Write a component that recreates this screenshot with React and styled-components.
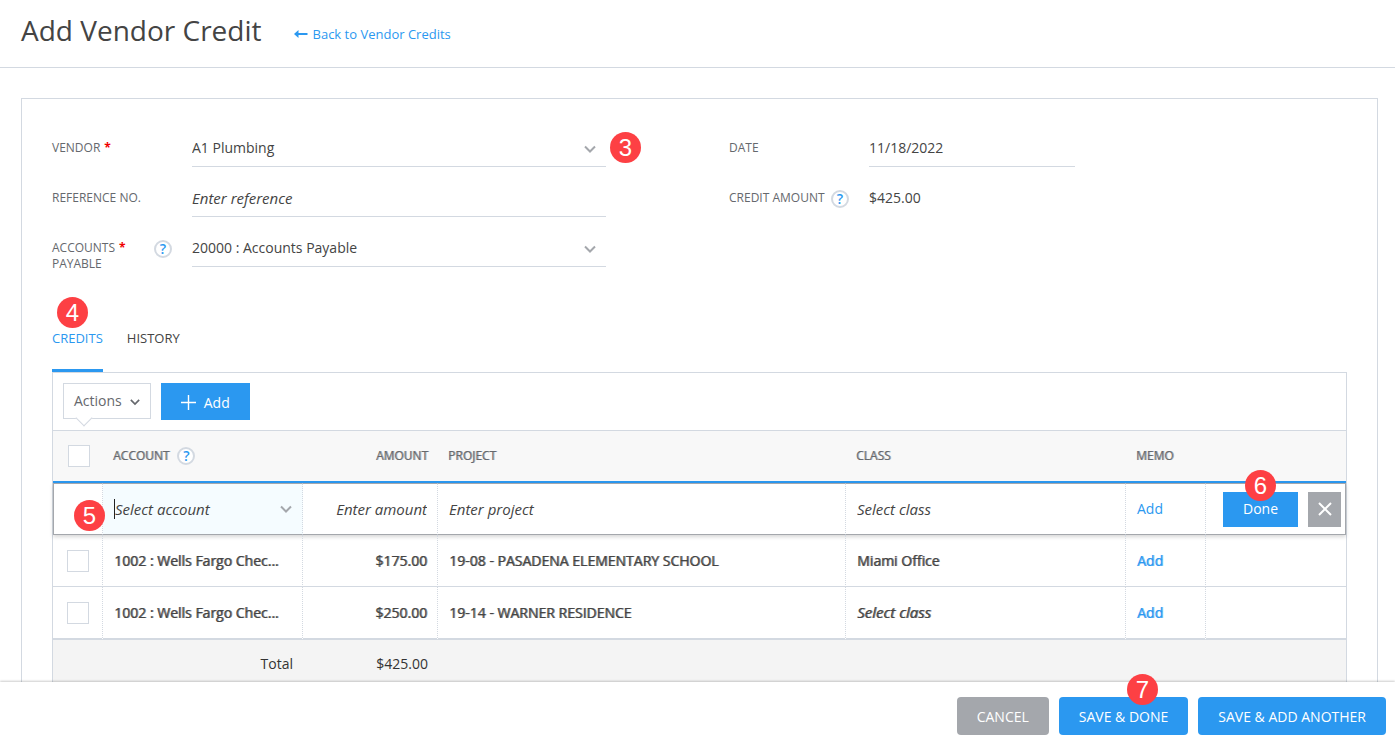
import React, { useState } from 'react';
import styled, { createGlobalStyle, css } from 'styled-components';

const colors = {
  blue: '#2b98f0',
  gray: '#a4a7ac',
  line: '#d3d9e1',
  text: '#444444',
  label: '#65686d',
  badge: '#fd4044',
};

const GlobalStyle = createGlobalStyle`
  * {
    box-sizing: border-box;
  }

  body {
    margin: 0;

    color: ${colors.text};
    background: white;

    font-family: 'Open Sans', 'Noto Sans', sans-serif;
    font-size: 14px;
    line-height: 20px;
  }

  button,
  input,
  select {
    margin: 0;
    padding: 0;

    border: none;
    border-radius: 0;
    outline: none;

    color: inherit;
    background: transparent;

    font: inherit;
  }

  button {
    cursor: pointer;
  }
`;

const Page = styled.div`
  display: flex;
  flex-direction: column;

  height: 100vh;
`;

const PageHeader = styled.header`
  display: flex;
  flex: none;
  align-items: flex-start;
  gap: 32px;

  padding: 10px 21px 17px;

  border-bottom: 1px solid ${colors.line};
`;

const PageTitle = styled.h1`
  margin: 0;

  font-size: 28px;
  font-weight: 400;
  line-height: 40px;
`;

const BackLink = styled.a`
  display: inline-flex;
  align-items: center;
  gap: 5px;

  padding-top: 14px;

  color: ${colors.blue};

  font-size: 13px;
  text-decoration: none;
`;

const Content = styled.main`
  flex: 1;

  min-height: 0;
  padding: 30px 17px 0 21px;

  overflow: hidden;
`;

const Panel = styled.section`
  padding: 24px 30px 60px;

  border: 1px solid ${colors.line};
`;

const FieldGrid = styled.div`
  display: grid;
  grid-template-columns: 554fr 618fr;
  column-gap: 123px;
`;

const FieldColumn = styled.div`
  display: flex;
  flex-direction: column;
`;

const Field = styled.div`
  display: flex;
  align-items: flex-start;

  height: 50px;
`;

const FieldLabel = styled.div`
  display: flex;
  flex: none;
  justify-content: space-between;

  width: 140px;
  padding: 17px 20px 0 0;

  color: ${colors.label};

  font-size: 12px;
  line-height: 16px;
`;

const Required = styled.span`
  padding-left: 4px;

  color: #f00000;

  font-weight: 700;
`;

const FieldControl = styled.div`
  display: flex;
  flex: 1;
  align-items: center;
  position: relative;

  max-width: ${(props) => (props.$narrow ? '206px' : 'none')};
  height: 44px;
  padding-top: 6px;

  border-bottom: 1px solid ${(props) => (props.$plain ? 'transparent' : colors.line)};
`;

const emptyText = css`
  font-size: 15px;
  font-style: italic;
`;

const TextInput = styled.input`
  width: 100%;
  height: 20px;

  text-align: ${(props) => props.$align || 'left'};

  &:placeholder-shown {
    ${emptyText}
  }

  &::placeholder {
    color: ${colors.text};
    opacity: 1;
  }
`;

const Select = styled.select`
  flex: 1;

  width: 100%;
  height: 20px;

  appearance: none;

  ${(props) => props.$empty && emptyText}
`;

const ChevronIcon = styled.svg`
  flex: none;

  width: 12px;
  height: 8px;

  fill: none;
  stroke: ${colors.gray};
  stroke-width: 2;

  pointer-events: none;
`;

const FieldChevron = styled(ChevronIcon)`
  margin: 3px 10px 0 0;
`;

const ActionsChevron = styled(ChevronIcon)`
  width: 10px;
  margin-top: 2px;

  stroke: ${colors.label};
`;

const HelpButton = styled.button`
  flex: none;

  width: 18px;
  height: 18px;

  border: 2px solid ${colors.line};
  border-radius: 50%;

  color: ${colors.blue};
  background: white;

  font-size: 14px;
  font-weight: 600;
  line-height: 14px;
  text-align: center;
`;

const Badge = styled.span`
  position: absolute;
  top: ${(props) => props.$top};
  left: ${(props) => props.$left};
  z-index: 2;

  width: 31px;
  height: 31px;

  border-radius: 50%;

  color: white;
  background: ${colors.badge};

  font-family: 'Liberation Sans', sans-serif;
  font-size: 24px;
  font-style: normal;
  font-weight: 400;
  line-height: 31px;
  text-align: center;

  pointer-events: none;
`;

const Tabs = styled.div`
  display: flex;
  gap: 24px;

  margin-top: 55px;
`;

const Tab = styled.button`
  position: relative;

  height: 44px;
  padding-bottom: 21px;

  border-bottom: 3px solid ${(props) => (props.$active ? colors.blue : 'transparent')};

  color: ${(props) => (props.$active ? colors.blue : colors.text)};

  font-size: 13px;
`;

const TableBox = styled.div`
  border: 1px solid ${colors.line};
`;

const Toolbar = styled.div`
  display: flex;
  align-items: flex-start;
  gap: 10px;

  padding: 10px;

  border-bottom: 1px solid ${colors.line};
`;

const ActionsButton = styled.button`
  display: flex;
  align-items: center;
  gap: 8px;
  position: relative;

  height: 36px;
  padding: 0 10px;

  border: 1px solid ${colors.line};

  color: ${colors.label};

  &::after {
    position: absolute;
    bottom: -6px;
    left: 14px;

    width: 11px;
    height: 11px;

    border: solid ${colors.line};
    border-width: 0 1px 1px 0;

    background: white;

    content: '';
    transform: rotate(45deg);
  }
`;

const AddButton = styled.button`
  display: flex;
  align-items: center;
  gap: 8px;

  height: 37px;
  padding: 2px 20px 0;

  color: white;
  background: ${colors.blue};
`;

const Table = styled.table`
  width: 100%;

  border-spacing: 0;
  table-layout: fixed;
`;

const HeadCell = styled.th`
  height: 52px;
  padding: 0 10px;

  border-bottom: 2px solid ${colors.blue};

  color: ${colors.label};
  background: #f8f8f8;

  font-size: 12px;
  font-weight: 500;
  text-align: ${(props) => props.$align || 'left'};
  text-shadow: 1px 0 rgba(101, 104, 109, 0.6);
`;

const HeadContent = styled.div`
  display: flex;
  align-items: center;
  gap: 8px;

  ${HelpButton} {
    text-shadow: none;
  }
`;

const Cell = styled.td`
  position: relative;

  height: 52px;
  padding: 0 10px 0 11px;

  border-right: 1px dotted ${colors.line};
  border-bottom: 1px solid ${colors.line};

  text-align: ${(props) => props.$align || 'left'};
  white-space: nowrap;

  &:last-child {
    border-right: none;
  }
`;

const LinkButton = styled.button`
  color: ${colors.blue};

  font-weight: inherit;
`;

const Row = styled.tr`
  font-weight: 500;
  text-shadow: 1px 0 rgba(68, 68, 68, 0.7);

  ${LinkButton} {
    text-shadow: 1px 0 rgba(43, 152, 240, 0.7);
  }

  &:last-child ${Cell} {
    height: 53px;

    border-bottom-width: 2px;
  }
`;

const EditRow = styled.tr`
  box-shadow: 0 2px 4px rgba(0, 0, 0, 0.16);

  ${Cell} {
    border-top: 1px solid ${colors.gray};
    border-bottom-color: ${colors.gray};
  }

  ${Cell}:first-child {
    border-left: 1px solid ${colors.gray};
  }

  ${Cell}:last-child {
    padding: 0 4px 0 17px;

    border-right: 1px solid ${colors.gray};
  }
`;

const ActiveCell = styled(Cell)`
  background: #f5fcff;
`;

const SelectBox = styled.div`
  display: flex;
  align-items: center;
`;

const CaretSelect = styled(Select)`
  border-left: 1px solid #222222;
`;

const EmptyValue = styled.em`
  ${emptyText}
`;

const CheckBox = styled.input`
  display: block;

  width: 22px;
  height: 22px;
  margin-left: ${(props) => (props.$head ? '5px' : '3px')};

  border: 1px solid ${colors.line};

  background: white;

  appearance: none;

  &:checked {
    background: ${colors.blue};
  }
`;

const RowButtons = styled.div`
  display: flex;
  justify-content: space-between;
`;

const DoneButton = styled.button`
  width: 75px;
  height: 35px;

  color: white;
  background: ${colors.blue};
`;

const CloseButton = styled.button`
  display: flex;
  align-items: center;
  justify-content: center;

  width: 33px;
  height: 35px;

  background: ${colors.gray};
`;

const TotalCell = styled.td`
  height: 48px;
  padding: 0 10px;

  color: #333333;
  background: #f4f4f4;

  font-weight: 500;
  text-align: right;
`;

const FormFooter = styled.footer`
  display: flex;
  flex: none;
  justify-content: flex-end;
  gap: 10px;
  position: relative;

  padding: 15px 9px 11px;

  background: white;
  box-shadow: 0 -1px 2px rgba(0, 0, 0, 0.2);
`;

const FooterButton = styled.button`
  position: relative;

  height: 38px;
  padding: 1px 20px 0;

  border-radius: 4px;

  color: white;
  background: ${(props) => (props.$secondary ? colors.gray : colors.blue)};
`;

const credits = [
  {
    id: 1,
    account: '1002 : Wells Fargo Chec...',
    amount: '$175.00',
    project: '19-08 - PASADENA ELEMENTARY SCHOOL',
    className: 'Miami Office',
  },
  {
    id: 2,
    account: '1002 : Wells Fargo Chec...',
    amount: '$250.00',
    project: '19-14 - WARNER RESIDENCE',
    className: null,
  },
];

function Chevron({ icon: Icon = ChevronIcon }) {
  return (
    <Icon viewBox="0 0 12 8" aria-hidden="true">
      <path d="M1 1.5 6 6.5 11 1.5" />
    </Icon>
  );
}

function Help({ topic }) {
  return (
    <HelpButton type="button" aria-label={`Help: ${topic}`}>
      ?
    </HelpButton>
  );
}

function VendorFields() {
  return (
    <FieldGrid>
      <FieldColumn>
        <Field>
          <FieldLabel>
            <label htmlFor="vendor">
              VENDOR<Required>*</Required>
            </label>
          </FieldLabel>
          <FieldControl>
            <Select id="vendor">
              <option>A1 Plumbing</option>
            </Select>
            <Chevron icon={FieldChevron} />
            <Badge $top="9px" $left="calc(100% + 4px)">
              3
            </Badge>
          </FieldControl>
        </Field>

        <Field>
          <FieldLabel>
            <label htmlFor="reference">REFERENCE NO.</label>
          </FieldLabel>
          <FieldControl>
            <TextInput id="reference" placeholder="Enter reference" />
          </FieldControl>
        </Field>

        <Field>
          <FieldLabel>
            <label htmlFor="payable">
              ACCOUNTS<Required>*</Required>
              <br />
              PAYABLE
            </label>
            <Help topic="accounts payable" />
          </FieldLabel>
          <FieldControl>
            <Select id="payable">
              <option>20000 : Accounts Payable</option>
            </Select>
            <Chevron icon={FieldChevron} />
          </FieldControl>
        </Field>
      </FieldColumn>

      <FieldColumn>
        <Field>
          <FieldLabel>
            <label htmlFor="date">DATE</label>
          </FieldLabel>
          <FieldControl $narrow>
            <TextInput id="date" defaultValue="11/18/2022" />
          </FieldControl>
        </Field>

        <Field>
          <FieldLabel>
            <span>CREDIT AMOUNT</span>
            <Help topic="credit amount" />
          </FieldLabel>
          <FieldControl $narrow $plain>
            $425.00
          </FieldControl>
        </Field>
      </FieldColumn>
    </FieldGrid>
  );
}

function CreditsTable() {
  return (
    <Table>
      <colgroup>
        <col style={{ width: 50 }} />
        <col style={{ width: 200 }} />
        <col style={{ width: 135 }} />
        <col />
        <col style={{ width: 280 }} />
        <col style={{ width: 80 }} />
        <col style={{ width: 140 }} />
      </colgroup>
      <thead>
        <tr>
          <HeadCell>
            <CheckBox $head type="checkbox" aria-label="Select all" />
          </HeadCell>
          <HeadCell>
            <HeadContent>
              ACCOUNT
              <Help topic="account" />
            </HeadContent>
          </HeadCell>
          <HeadCell $align="right">AMOUNT</HeadCell>
          <HeadCell>PROJECT</HeadCell>
          <HeadCell>CLASS</HeadCell>
          <HeadCell>MEMO</HeadCell>
          <HeadCell />
        </tr>
      </thead>
      <tbody>
        <EditRow>
          <Cell>
            <Badge $top="16px" $left="20px">
              5
            </Badge>
          </Cell>
          <ActiveCell>
            <SelectBox>
              <CaretSelect $empty aria-label="Account">
                <option>Select account</option>
              </CaretSelect>
              <Chevron />
            </SelectBox>
          </ActiveCell>
          <Cell>
            <TextInput
              $align="right"
              aria-label="Amount"
              placeholder="Enter amount"
            />
          </Cell>
          <Cell>
            <TextInput aria-label="Project" placeholder="Enter project" />
          </Cell>
          <Cell>
            <Select $empty aria-label="Class">
              <option>Select class</option>
            </Select>
          </Cell>
          <Cell>
            <LinkButton type="button">Add</LinkButton>
          </Cell>
          <Cell>
            <RowButtons>
              <DoneButton type="button">Done</DoneButton>
              <CloseButton type="button" aria-label="Close">
                <svg width="14" height="14" viewBox="0 0 14 14">
                  <path
                    d="M1 1 13 13M13 1 1 13"
                    stroke="white"
                    strokeWidth="2"
                  />
                </svg>
              </CloseButton>
            </RowButtons>
            <Badge $top="-14px" $left="39px">
              6
            </Badge>
          </Cell>
        </EditRow>
        {credits.map((credit) => (
          <Row key={credit.id}>
            <Cell>
              <CheckBox type="checkbox" aria-label={`Select ${credit.project}`} />
            </Cell>
            <Cell>{credit.account}</Cell>
            <Cell $align="right">{credit.amount}</Cell>
            <Cell>{credit.project}</Cell>
            <Cell>
              {credit.className || <EmptyValue>Select class</EmptyValue>}
            </Cell>
            <Cell>
              <LinkButton type="button">Add</LinkButton>
            </Cell>
            <Cell />
          </Row>
        ))}
      </tbody>
      <tfoot>
        <tr>
          <TotalCell colSpan={2}>Total</TotalCell>
          <TotalCell>$425.00</TotalCell>
          <TotalCell colSpan={4} />
        </tr>
      </tfoot>
    </Table>
  );
}

export default function App() {
  const [tab, setTab] = useState('credits');

  return (
    <Page>
      <GlobalStyle />

      <PageHeader>
        <PageTitle>Add Vendor Credit</PageTitle>
        <BackLink href="#credits">
          <svg width="14" height="8" viewBox="0 0 14 8" aria-hidden="true">
            <path d="M0 4 4.5 0V3H13.5V5H4.5V8Z" fill={colors.blue} />
          </svg>
          Back to Vendor Credits
        </BackLink>
      </PageHeader>

      <Content>
        <Panel>
          <VendorFields />

          <Tabs role="tablist">
            <Tab
              type="button"
              role="tab"
              aria-selected={tab === 'credits'}
              $active={tab === 'credits'}
              onClick={() => setTab('credits')}
            >
              CREDITS
              <Badge $top="-31px" $left="5px">
                4
              </Badge>
            </Tab>
            <Tab
              type="button"
              role="tab"
              aria-selected={tab === 'history'}
              $active={tab === 'history'}
              onClick={() => setTab('history')}
            >
              HISTORY
            </Tab>
          </Tabs>

          <TableBox>
            <Toolbar>
              <ActionsButton type="button">
                Actions
                <Chevron icon={ActionsChevron} />
              </ActionsButton>
              <AddButton type="button">
                <svg width="15" height="15" viewBox="0 0 15 15">
                  <path d="M7.5 0V15M0 7.5H15" stroke="white" strokeWidth="1.4" />
                </svg>
                Add
              </AddButton>
            </Toolbar>
            <CreditsTable />
          </TableBox>
        </Panel>
      </Content>

      <FormFooter>
        <FooterButton type="button" $secondary>
          CANCEL
        </FooterButton>
        <FooterButton type="button">
          SAVE &amp; DONE
          <Badge $top="-23px" $left="68px">
            7
          </Badge>
        </FooterButton>
        <FooterButton type="button">SAVE &amp; ADD ANOTHER</FooterButton>
      </FormFooter>
    </Page>
  );
}
